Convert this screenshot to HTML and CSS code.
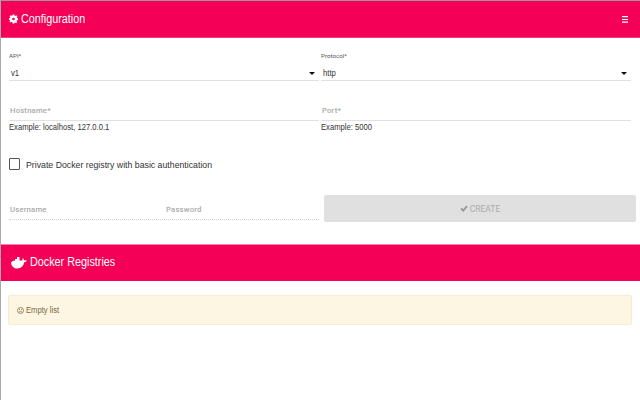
FILE: index.html
```html
<!DOCTYPE html>
<html lang="en">
<head>
<meta charset="utf-8">
<title>Configuration</title>
<link rel="stylesheet" href="styles.css">
</head>
<body>
<main class="app">
  <header class="toolbar">
    <svg class="gear" viewBox="0 0 20 20"><path fill="#fff" fill-rule="evenodd" d="M8 0h4l.6 2.600 1.300.6 2.300-1.500 2.600 2.700-1.500 2.300.5 1.300 2.200.6v3.800l-2.400.6-.6 1.300 1.500 2.300-2.700 2.600-2.300-1.400-1.300.5L12 20H8l-.6-3.200-1.300-.5-2.300 1.400-2.700-2.600 1.500-2.300-.6-1.300L0 12V8.200l2.200-.6.500-1.300-1.400-2.300L4 1.500l2.200 1.400 1.300-.5zM10 7a3 3 0 1 0 0 6 3 3 0 0 0 0-6z"/></svg>
    <h1 class="title">Configuration</h1>
    <svg class="menu" viewBox="0 0 6 7"><path fill="#fff" d="M0 0h6v1.200H0zM0 3h6v1H0zM0 5.500h6v1.200H0z"/></svg>
  </header>
  <form class="form">
    <div class="row selects">
      <div class="field"><label class="small-label">API*</label><div class="select"><span class="condensed">v1</span><i class="caret"></i></div></div>
      <div class="field"><label class="small-label">Protocol*</label><div class="select"><span class="condensed">http</span><i class="caret"></i></div></div>
    </div>
    <div class="row inputs">
      <div class="field"><div class="input">Hostname*</div><div class="hint condensed">Example: localhost, 127.0.0.1</div></div>
      <div class="field"><div class="input">Port*</div><div class="hint condensed">Example: 5000</div></div>
    </div>
    <div class="check"><i class="box"></i><span class="check-label">Private Docker registry with basic authentication</span></div>
    <div class="row auth">
      <div class="credentials"><div class="input">Username</div><div class="input">Password</div></div>
      <button class="create" type="button" disabled><svg class="tick" viewBox="0 0 8 7"><path d="M1 3.500l2.200 2.100L7 1.200" fill="none" stroke="#999" stroke-width="1.900"/></svg><span>CREATE</span></button>
    </div>
  </form>
  <header class="toolbar registries">
    <svg class="whale" viewBox="0 0 16 12"><path fill="#fff" d="M0 5.500 2 3.800h2V2h2V0h2.500v3.500H11c.6 0 .8-.5.300-1.500l.7-1 1.300 2.200 2.500.300-.8 1.300-1.800.5C12.300 9.300 10 11.500 6.500 11.500 3 11.500.5 9.500 0 5.500z"/></svg>
    <h2 class="title">Docker Registries</h2>
  </header>
  <div class="alert">
    <svg class="frown" viewBox="0 0 14 14"><g fill="none" stroke="#7b6840" stroke-width="1.500"><circle cx="7" cy="7" r="6"/><path d="M4 10.300Q7 7 10 10.300"/></g><circle cx="4.800" cy="5.200" r="1" fill="#7b6840"/><circle cx="9.200" cy="5.200" r="1" fill="#7b6840"/></svg>
    <span class="condensed">Empty list</span>
  </div>
</main>
</body>
</html>
```
FILE: styles.css
```css
* { box-sizing: border-box; }
body { margin: 0; background: #fff; font-family: "Liberation Sans", Arial, sans-serif; color: #333; }
.app { width: 640px; height: 400px; overflow: hidden; border-top: 1px solid #999; border-left: 1px solid #aaa; }
.toolbar { display: flex; align-items: center; height: 37px; padding: 0 12px 0 8px; background: #f50057; color: #fff; border-bottom: 1px solid #f83a7c; }
.title { margin: 0; font-size: 12px; line-height: 16px; font-weight: 400; white-space: nowrap; transform: scaleX(.9); transform-origin: left; }
.gear { width: 9px; height: 10px; margin-right: 3px; }
.menu { width: 6px; height: 7px; margin: 0 0 0 auto; }
.form { height: 206px; padding: 14px 8px 0; }
.row { display: flex; gap: 2px; }
.field { width: 310px; }
.selects { height: 49px; }
.small-label { display: block; height: 8px; font: 6.200px/8px Roboto, sans-serif; color: #555; }
.select { display: flex; align-items: center; justify-content: space-between; height: 21px; padding: 6px 4px 0 2px; border-bottom: 1px solid #e1e1e1; font-size: 8.500px; line-height: 14px; }
.condensed { transform: scaleX(.9); transform-origin: left; }
.caret { width: 0; height: 0; border: 3px solid transparent; border-top-color: #111; border-bottom: 0; }
.input { height: 20px; padding: 4px 2px 0 1px; border-bottom: 1px solid #e1e1e1; font: 500 7.700px/12px Roboto, sans-serif; letter-spacing: .2px; color: #aaa; }
.hint { height: 12px; font-size: 8.500px; line-height: 12px; white-space: nowrap; }
.inputs { height: 57px; }
.check { display: flex; align-items: center; gap: 5.500px; height: 12px; font-size: 9.500px; white-space: nowrap; }
.check-label { transform: scaleX(.92); transform-origin: left; }
.box { width: 11px; height: 12px; border: 1px solid #555; border-radius: 1px; }
.auth { margin-top: 25px; gap: 5px; }
.credentials { display: flex; width: 310px; height: 25px; padding-top: 5px; border-bottom: 1px dotted #d4d4d4; }
.credentials .input { flex: none; width: 156px; border: 0; }
.create { display: flex; flex: none; align-items: center; justify-content: center; gap: 2px; width: 312px; height: 27px; padding: 0; border: 0; border-radius: 2px; background: #e0e0e0; color: #aaa; font: 8.500px/12px Roboto, sans-serif; }
.tick { width: 8px; height: 7px; }
.registries { padding: 0 12px 3px 10px; border: 0; border-top: 1px solid #fa7faa; }
.whale { width: 16px; height: 12px; margin: 2px 3px 0 0; }
.alert { display: flex; align-items: center; gap: 2px; width: 624px; height: 30px; margin: 14px 0 0 7px; padding-left: 8px; background: #fcf6e2; border: 1px solid #faebcc; border-radius: 2px; color: #7b6840; font-size: 8.500px; }
.frown { width: 7px; height: 7px; }
```
